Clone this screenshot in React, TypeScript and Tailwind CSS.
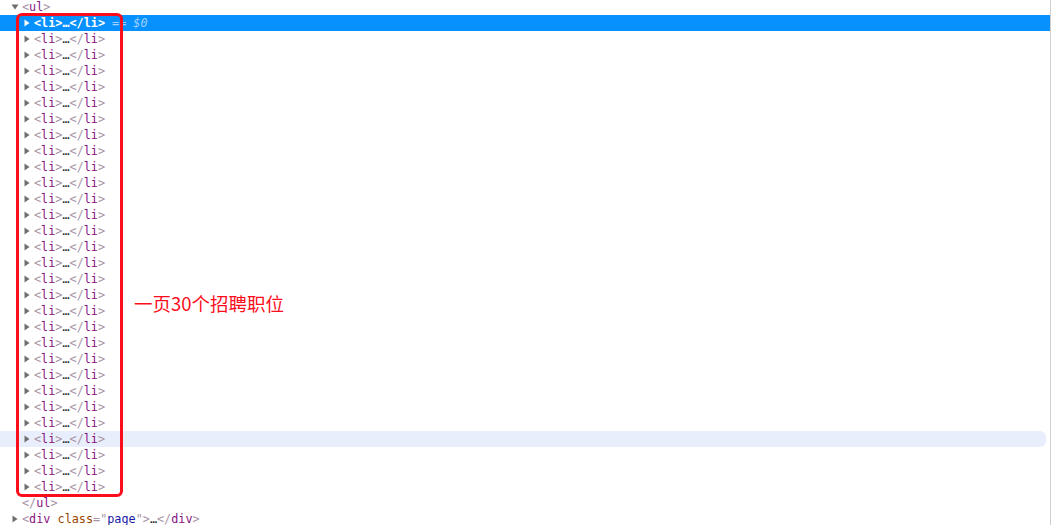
import React from 'react';

const mono = { fontFamily: '"DejaVu Sans Mono", "Liberation Mono", monospace' };

const Caret: React.FC<{ down?: boolean; white?: boolean }> = ({ down, white }) => (
  <svg width="8" height="8" viewBox="0 0 8 8" className="shrink-0">
    {down ? (
      <path d="M0.5 1.5 L7.5 1.5 L4 6.5 Z" fill={white ? '#fff' : '#6e6e6e'} />
    ) : (
      <path d="M1.5 0.5 L6.5 4 L1.5 7.5 Z" fill={white ? '#fff' : '#6e6e6e'} />
    )}
  </svg>
);

const LiRow: React.FC<{ selected?: boolean; hovered?: boolean }> = ({ selected, hovered }) => {
  if (selected) {
    return (
      <div className="h-4 flex items-center bg-[#0791ff] text-white">
        <div className="w-[34px] flex justify-end pr-[3px]">
          <Caret white />
        </div>
        <span className="font-bold">&lt;li&gt;…&lt;/li&gt;</span>
        <span className="ml-[7px] italic text-[#9fd0ff]">== $0</span>
      </div>
    );
  }
  return (
    <div className={hovered ? 'h-4 flex items-center bg-[#e8eefb] rounded-r-md mr-[4px]' : 'h-4 flex items-center'}>
      <div className="w-[34px] flex justify-end pr-[3px]">
        <Caret />
      </div>
      <span className="text-[#a894a6]">&lt;</span>
      <span className="text-[#881280]">li</span>
      <span className="text-[#a894a6]">&gt;</span>
      <span className="text-[#222]">…</span>
      <span className="text-[#a894a6]">&lt;/</span>
      <span className="text-[#881280]">li</span>
      <span className="text-[#a894a6]">&gt;</span>
    </div>
  );
};

export default function App() {
  const rows = Array.from({ length: 30 }, (_, i) => i);
  return (
    <div className="relative w-[1051px] h-[525px] bg-white overflow-hidden border-r border-[#cfcfcf]">
      <div className="mt-[-1px] text-[11.8px] leading-4" style={mono}>
        {/* <ul> */}
        <div className="h-4 flex items-center">
          <div className="w-[22px] flex justify-end pr-[3px]">
            <Caret down />
          </div>
          <span className="text-[#a894a6]">&lt;</span>
          <span className="text-[#881280]">ul</span>
          <span className="text-[#a894a6]">&gt;</span>
        </div>

        {rows.map((i) => (
          <LiRow key={i} selected={i === 0} hovered={i === 26} />
        ))}

        {/* </ul> */}
        <div className="h-4 flex items-center pl-[22px]">
          <span className="text-[#a894a6]">&lt;/</span>
          <span className="text-[#881280]">ul</span>
          <span className="text-[#a894a6]">&gt;</span>
        </div>

        {/* <div class="page"> */}
        <div className="h-4 flex items-center">
          <div className="w-[22px] flex justify-end pr-[3px]">
            <Caret />
          </div>
          <span className="text-[#a894a6]">&lt;</span>
          <span className="text-[#881280]">div</span>
          <span className="text-[#994500]">&nbsp;class</span>
          <span className="text-[#a894a6]">="</span>
          <span className="text-[#1a1aa6]">page</span>
          <span className="text-[#a894a6]">"&gt;</span>
          <span className="text-[#222]">…</span>
          <span className="text-[#a894a6]">&lt;/</span>
          <span className="text-[#881280]">div</span>
          <span className="text-[#a894a6]">&gt;</span>
        </div>
      </div>

      {/* annotation box */}
      <div className="absolute left-[16px] top-[13px] w-[107px] h-[484px] border-[3px] border-[#fb0d1b] rounded-[6px]" />
      <div
        className="absolute left-[134px] top-[290px] text-[18.5px] leading-[26px] text-[#fb0d1b]"
        style={{ fontFamily: '"Noto Sans CJK SC", "Noto Sans", sans-serif' }}
      >
        一页30个招聘职位
      </div>
    </div>
  );
}
